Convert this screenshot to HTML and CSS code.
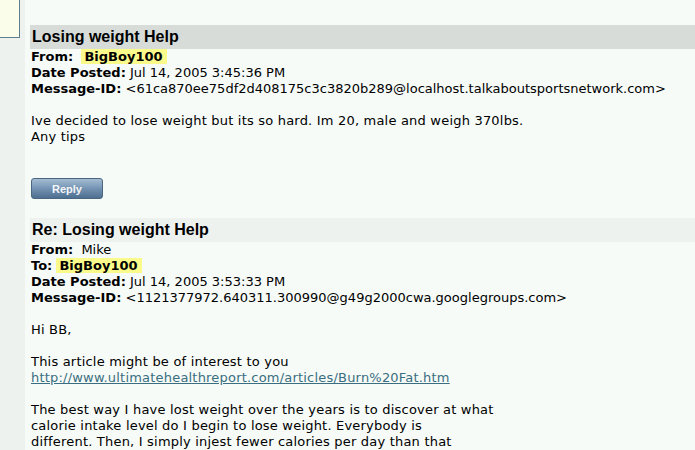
FILE: index.html
```html
<!DOCTYPE html>
<html>
<head>
<meta charset="utf-8">
<link rel="stylesheet" href="styles.css">
</head>
<body>
<div class="page">
  <div class="side">
    <div class="sidebox"></div>
  </div>
  <div class="main">
    <div class="msg">
      <div class="title title-first">Losing weight Help</div>
      <div class="hdr"><b>From:</b>&nbsp; <span class="hl">BigBoy100</span></div>
      <div class="hdr"><b>Date Posted:</b> Jul 14, 2005 3:45:36 PM</div>
      <div class="hdr"><b>Message-ID:</b> &lt;61ca870ee75df2d408175c3c3820b289@localhost.talkaboutsportsnetwork.com&gt;</div>
      <div class="body">
        <p>Ive decided to lose weight but its so hard. Im 20, male and weigh 370lbs.<br>Any tips</p>
      </div>
      <div class="actions"><button class="reply">Reply</button></div>
    </div>
    <div class="msg">
      <div class="title title-re">Re: Losing weight Help</div>
      <div class="hdr"><b>From:</b>&nbsp; Mike</div>
      <div class="hdr"><b>To:</b> <span class="hl">BigBoy100</span></div>
      <div class="hdr"><b>Date Posted:</b> Jul 14, 2005 3:53:33 PM</div>
      <div class="hdr"><b>Message-ID:</b> &lt;1121377972.640311.300990@g49g2000cwa.googlegroups.com&gt;</div>
      <div class="body">
        <p>Hi BB,</p>
        <p>This article might be of interest to you<br><a href="#">http://www.ultimatehealthreport.com/articles/Burn%20Fat.htm</a></p>
        <p>The best way I have lost weight over the years is to discover at what<br>calorie intake level do I begin to lose weight. Everybody is<br>different. Then, I simply injest fewer calories per day than that</p>
      </div>
    </div>
  </div>
</div>
</body>
</html>
```
FILE: styles.css
```css
html, body {
  margin: 0;
  padding: 0;
  height: 100%;
  overflow: hidden;
}
body {
  background: #f6fbf8;
  font-family: "DejaVu Sans", Verdana, sans-serif;
  font-size: 13px;
  color: #000;
}
.page {
  display: flex;
  min-height: 100%;
}
.side {
  width: 25px;
  flex: none;
  background: #eef2ef;
}
.sidebox {
  width: 19px;
  height: 37px;
  background: #fafde9;
  border-right: 1px solid #5e7e8e;
  border-bottom: 1px solid #5e7e8e;
}
.main {
  flex: 1;
  padding: 25px 0 0 5px;
}
.title {
  font-family: "Liberation Sans", Arial, sans-serif;
  font-weight: bold;
  font-size: 16px;
  height: 24px;
  line-height: 24px;
  padding-left: 2px;
}
.title-first { background: #d7dcd9; }
.title-re { background: #eef2ef; }
.hdr {
  line-height: 16px;
  padding-left: 1px;
  white-space: nowrap;
}
.hdr b { font-weight: bold; }
.hl {
  background: #fbfb8c;
  font-weight: bold;
  padding: 0 4px 0 3px;
}
.body {
  padding-left: 1px;
  line-height: 16px;
  letter-spacing: 0.2px;
  white-space: nowrap;
}
.body p {
  margin: 16px 0 0;
}
.body a {
  color: #3a6e80;
}
.actions {
  padding: 33px 0 19px 1px;
}
.reply {
  width: 72px;
  height: 21px;
  border: 1px solid #4a6680;
  border-radius: 3px;
  background: linear-gradient(#a4bcd2, #7493b3 50%, #4f6f90);
  color: #f4f6f8;
  font-family: "Liberation Sans", Arial, sans-serif;
  font-weight: bold;
  font-size: 11px;
  padding: 0;
  display: block;
}
```
